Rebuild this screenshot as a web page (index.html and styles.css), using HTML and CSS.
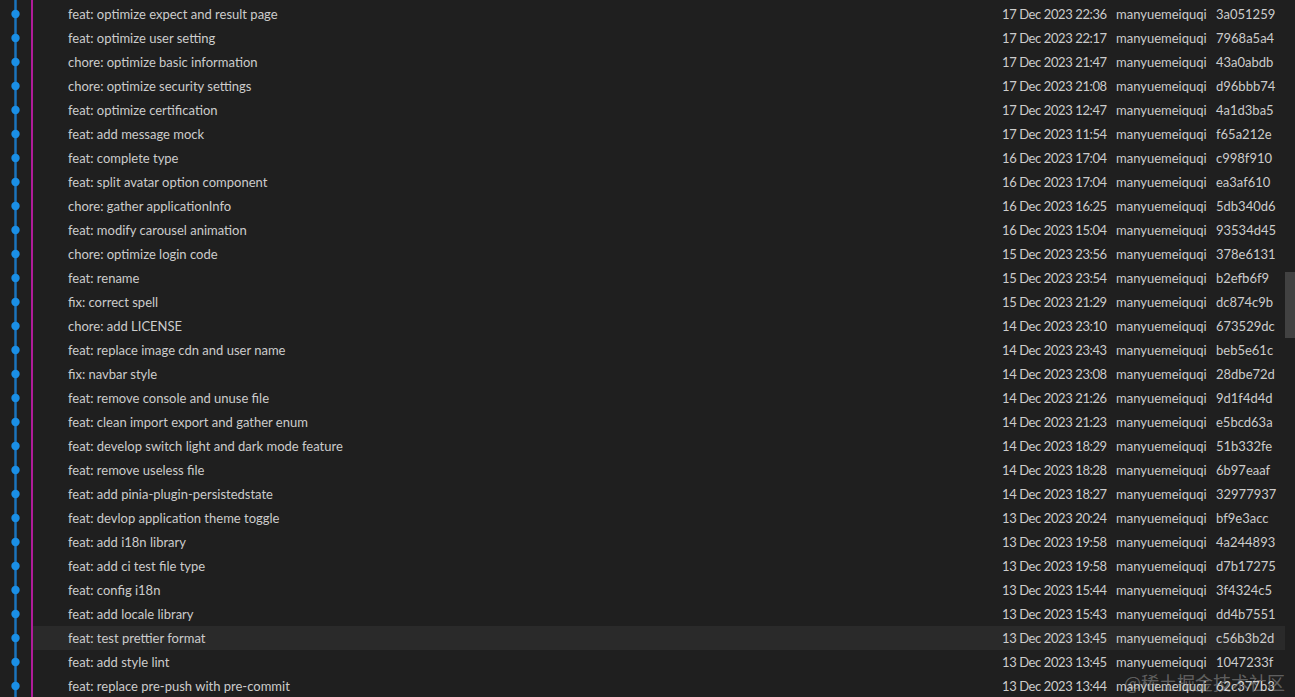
FILE: index.html
```html
<!DOCTYPE html>
<html>
<head>
  <link rel="stylesheet" href="styles.css">
</head>
<body>
  <div class="history">
    <div class="graph">
      <svg width="33" height="697" viewBox="0 0 33 697">
        <line x1="15.5" y1="0" x2="15.5" y2="697" stroke="#1b74bd" stroke-width="2.5"/>
        <line x1="32" y1="0" x2="32" y2="697" stroke="#b01c9a" stroke-width="2"/>
        <g fill="#1a8fe6" id="dots"></g>
      </svg>
    </div>

    <div class="commits">
      <div class="row"><span class="msg">feat: optimize expect and result page</span><span class="date">17 Dec 2023 22:36</span><span>manyuemeiquqi</span><span>3a051259</span></div>
      <div class="row"><span class="msg">feat: optimize user setting</span><span class="date">17 Dec 2023 22:17</span><span>manyuemeiquqi</span><span>7968a5a4</span></div>
      <div class="row"><span class="msg">chore: optimize basic information</span><span class="date">17 Dec 2023 21:47</span><span>manyuemeiquqi</span><span>43a0abdb</span></div>
      <div class="row"><span class="msg">chore: optimize security settings</span><span class="date">17 Dec 2023 21:08</span><span>manyuemeiquqi</span><span>d96bbb74</span></div>
      <div class="row"><span class="msg">feat: optimize certification</span><span class="date">17 Dec 2023 12:47</span><span>manyuemeiquqi</span><span>4a1d3ba5</span></div>
      <div class="row"><span class="msg">feat: add message mock</span><span class="date">17 Dec 2023 11:54</span><span>manyuemeiquqi</span><span>f65a212e</span></div>
      <div class="row"><span class="msg">feat: complete type</span><span class="date">16 Dec 2023 17:04</span><span>manyuemeiquqi</span><span>c998f910</span></div>
      <div class="row"><span class="msg">feat: split avatar option component</span><span class="date">16 Dec 2023 17:04</span><span>manyuemeiquqi</span><span>ea3af610</span></div>
      <div class="row"><span class="msg">chore: gather applicationInfo</span><span class="date">16 Dec 2023 16:25</span><span>manyuemeiquqi</span><span>5db340d6</span></div>
      <div class="row"><span class="msg">feat: modify carousel animation</span><span class="date">16 Dec 2023 15:04</span><span>manyuemeiquqi</span><span>93534d45</span></div>
      <div class="row"><span class="msg">chore: optimize login code</span><span class="date">15 Dec 2023 23:56</span><span>manyuemeiquqi</span><span>378e6131</span></div>
      <div class="row"><span class="msg">feat: rename</span><span class="date">15 Dec 2023 23:54</span><span>manyuemeiquqi</span><span>b2efb6f9</span></div>
      <div class="row"><span class="msg">fix: correct spell</span><span class="date">15 Dec 2023 21:29</span><span>manyuemeiquqi</span><span>dc874c9b</span></div>
      <div class="row"><span class="msg">chore: add LICENSE</span><span class="date">14 Dec 2023 23:10</span><span>manyuemeiquqi</span><span>673529dc</span></div>
      <div class="row"><span class="msg">feat: replace image cdn and user name</span><span class="date">14 Dec 2023 23:43</span><span>manyuemeiquqi</span><span>beb5e61c</span></div>
      <div class="row"><span class="msg">fix: navbar style</span><span class="date">14 Dec 2023 23:08</span><span>manyuemeiquqi</span><span>28dbe72d</span></div>
      <div class="row"><span class="msg">feat: remove console and unuse file</span><span class="date">14 Dec 2023 21:26</span><span>manyuemeiquqi</span><span>9d1f4d4d</span></div>
      <div class="row"><span class="msg">feat: clean import export and gather enum</span><span class="date">14 Dec 2023 21:23</span><span>manyuemeiquqi</span><span>e5bcd63a</span></div>
      <div class="row"><span class="msg">feat: develop switch light and dark mode feature</span><span class="date">14 Dec 2023 18:29</span><span>manyuemeiquqi</span><span>51b332fe</span></div>
      <div class="row"><span class="msg">feat: remove useless file</span><span class="date">14 Dec 2023 18:28</span><span>manyuemeiquqi</span><span>6b97eaaf</span></div>
      <div class="row"><span class="msg">feat: add pinia-plugin-persistedstate</span><span class="date">14 Dec 2023 18:27</span><span>manyuemeiquqi</span><span>32977937</span></div>
      <div class="row"><span class="msg">feat: devlop application theme toggle</span><span class="date">13 Dec 2023 20:24</span><span>manyuemeiquqi</span><span>bf9e3acc</span></div>
      <div class="row"><span class="msg">feat: add i18n library</span><span class="date">13 Dec 2023 19:58</span><span>manyuemeiquqi</span><span>4a244893</span></div>
      <div class="row"><span class="msg">feat: add ci test file type</span><span class="date">13 Dec 2023 19:58</span><span>manyuemeiquqi</span><span>d7b17275</span></div>
      <div class="row"><span class="msg">feat: config i18n</span><span class="date">13 Dec 2023 15:44</span><span>manyuemeiquqi</span><span>3f4324c5</span></div>
      <div class="row"><span class="msg">feat: add locale library</span><span class="date">13 Dec 2023 15:43</span><span>manyuemeiquqi</span><span>dd4b7551</span></div>
      <div class="row hover"><span class="msg">feat: test prettier format</span><span class="date">13 Dec 2023 13:45</span><span>manyuemeiquqi</span><span>c56b3b2d</span></div>
      <div class="row"><span class="msg">feat: add style lint</span><span class="date">13 Dec 2023 13:45</span><span>manyuemeiquqi</span><span>1047233f</span></div>
      <div class="row"><span class="msg">feat: replace pre-push with pre-commit</span><span class="date">13 Dec 2023 13:44</span><span>manyuemeiquqi</span><span>62c377b3</span></div>
    </div>

    <div class="scrollbar"><div class="thumb"></div></div>
  </div>

  <div class="watermark">@稀土掘金技术社区</div>

  <script>
    // one dot per commit row
    var dots = document.getElementById("dots");
    var rows = document.querySelectorAll(".commits .row").length;
    for (var i = 0; i < rows; i++) {
      var c = document.createElementNS("http://www.w3.org/2000/svg", "circle");
      c.setAttribute("cx", "15.5");
      c.setAttribute("cy", 14 + i * 24);
      c.setAttribute("r", "4.2");
      dots.appendChild(c);
    }
  </script>
</body>
</html>
```

FILE: styles.css
```css
html, body {
  margin: 0;
  height: 100%;
  overflow: hidden;
  background-color: #1f1f1f;
}

body {
  font-family: Lato, "Noto Sans", sans-serif;
  font-size: 13px;
  color: #cccccc;
}

.history {
  display: flex;
  height: 697px;
}

.graph {
  width: 33px;
  flex-shrink: 0;
}

.graph svg {
  display: block;
}

.commits {
  flex: 1;
  padding-top: 2px;
}

.row {
  display: grid;
  grid-template-columns: 1fr 114px 100px 69px;
  height: 24px;
  line-height: 24px;
  white-space: nowrap;
}

.row .msg {
  padding-left: 35px;
}

.row .date {
  letter-spacing: -0.4px;
}

.row.hover {
  background-color: #2a2a2a;
}

.scrollbar {
  width: 10px;
  flex-shrink: 0;
  padding-top: 272px;
}

.thumb {
  height: 66px;
  background-color: #424242;
}

.watermark {
  position: absolute;
  right: 10px;
  bottom: 3px;
  font-family: "Noto Sans CJK SC", sans-serif;
  font-size: 18px;
  line-height: 24px;
  color: rgba(255, 255, 255, 0.3);
}
```
